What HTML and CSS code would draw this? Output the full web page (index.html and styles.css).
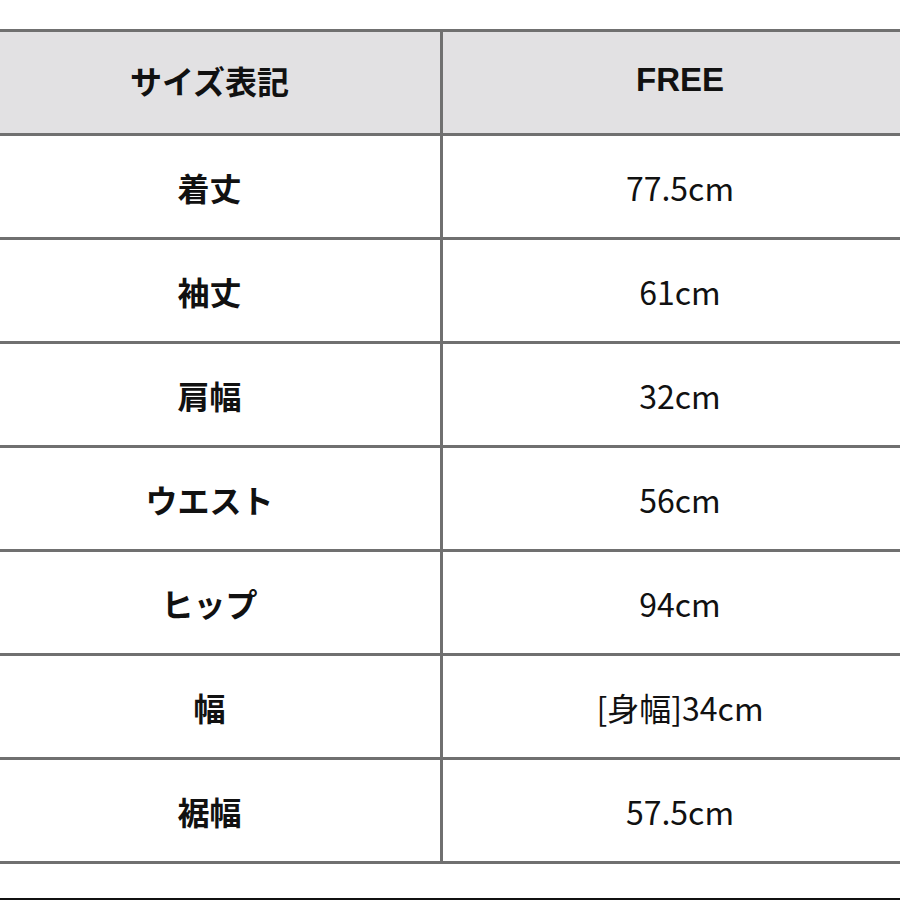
FILE: index.html
```html
<!DOCTYPE html>
<html lang="ja">
<head>
<meta charset="utf-8">
<link rel="stylesheet" href="styles.css">
</head>
<body>
<div class="page">
<table class="size-table">
  <thead>
    <tr><th>サイズ表記</th><th class="free">FREE</th></tr>
  </thead>
  <tbody>
    <tr><th>着丈</th><td>77.5cm</td></tr>
    <tr><th>袖丈</th><td>61cm</td></tr>
    <tr><th>肩幅</th><td>32cm</td></tr>
    <tr><th>ウエスト</th><td>56cm</td></tr>
    <tr><th>ヒップ</th><td>94cm</td></tr>
    <tr><th>幅</th><td>[身幅]34cm</td></tr>
    <tr><th>裾幅</th><td>57.5cm</td></tr>
  </tbody>
</table>
<div class="bottom-bar"></div>
</div>
</body>
</html>
```
FILE: styles.css
```css
html, body {
  margin: 0;
  padding: 0;
  background: #ffffff;
  overflow: hidden;
}
.page {
  width: 900px;
  height: 900px;
  position: relative;
  overflow: hidden;
  padding-top: 29px;
  box-sizing: border-box;
  font-family: "Noto Sans CJK JP", "Noto Sans", sans-serif;
  color: #111111;
}
.size-table {
  border-collapse: collapse;
  margin-left: -24px;
  width: 944px;
  table-layout: fixed;
}
.size-table th,
.size-table td {
  border: 3px solid #707070;
  height: 101px;
  padding: 0;
  text-align: center;
  vertical-align: middle;
  font-size: 32px;
  line-height: 1;
  box-sizing: content-box;
}
.size-table th {
  font-weight: 700;
}
.size-table td {
  font-weight: 400;
}
.size-table tr > :first-child {
  width: 461px;
}
.size-table thead th {
  background: #e2e1e3;
  height: 95px;
  padding-bottom: 6px;
}
.size-table thead th.free {
  font-family: "Liberation Sans", Arial, sans-serif;
  font-size: 33px;
}
.bottom-bar {
  position: absolute;
  left: 0;
  right: 0;
  top: 898px;
  height: 2px;
  background: #111111;
}
```
